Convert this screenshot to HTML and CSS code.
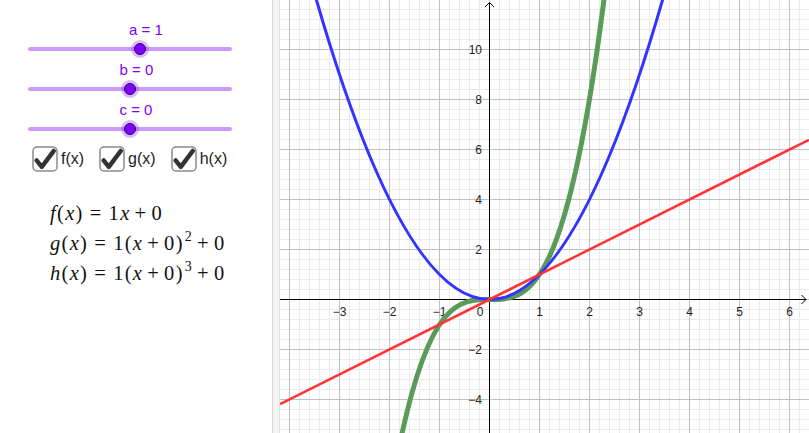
FILE: index.html
```html
<!DOCTYPE html>
<html>
<head>
<meta charset="utf-8">
<link rel="stylesheet" href="styles.css">
</head>
<body>
<div class="app">
  <div class="panel">
    <div class="slider">
      <div class="slabel lbl-a">a = 1</div>
      <div class="track"><span class="knob" style="left:103px"></span></div>
    </div>
    <div class="slider">
      <div class="slabel lbl-b">b = 0</div>
      <div class="track"><span class="knob" style="left:93px"></span></div>
    </div>
    <div class="slider">
      <div class="slabel lbl-b">c = 0</div>
      <div class="track"><span class="knob" style="left:93px"></span></div>
    </div>
    <div class="checks">
      <div class="cb-item">
        <svg class="cbox" width="26" height="26" viewBox="0 0 26 26"><rect x="1" y="1" width="24" height="24" rx="4" fill="#fff" stroke="#8a8a8a" stroke-width="1.5"/><path d="M4.6,14.4 L9.8,20.8 L21.8,4.9" fill="none" stroke="#333" stroke-width="4.4" stroke-linecap="round" stroke-linejoin="round"/></svg>
        <span class="cb-label">f(x)</span>
      </div>
      <div class="cb-item">
        <svg class="cbox" width="26" height="26" viewBox="0 0 26 26"><rect x="1" y="1" width="24" height="24" rx="4" fill="#fff" stroke="#8a8a8a" stroke-width="1.5"/><path d="M4.6,14.4 L9.8,20.8 L21.8,4.9" fill="none" stroke="#333" stroke-width="4.4" stroke-linecap="round" stroke-linejoin="round"/></svg>
        <span class="cb-label">g(x)</span>
      </div>
      <div class="cb-item">
        <svg class="cbox" width="26" height="26" viewBox="0 0 26 26"><rect x="1" y="1" width="24" height="24" rx="4" fill="#fff" stroke="#8a8a8a" stroke-width="1.5"/><path d="M4.6,14.4 L9.8,20.8 L21.8,4.9" fill="none" stroke="#333" stroke-width="4.4" stroke-linecap="round" stroke-linejoin="round"/></svg>
        <span class="cb-label">h(x)</span>
      </div>
    </div>
    <div class="formulas">
      <div class="formula"><i>f</i>(<i>x</i>)<span class="rel">=</span>1<i>x</i><span class="bin">+</span>0</div>
      <div class="formula"><i>g</i>(<i>x</i>)<span class="rel">=</span>1(<i>x</i><span class="bin">+</span>0)<span class="sup">2</span><span class="bin">+</span>0</div>
      <div class="formula"><i>h</i>(<i>x</i>)<span class="rel">=</span>1(<i>x</i><span class="bin">+</span>0)<span class="sup">3</span><span class="bin">+</span>0</div>
    </div>
  </div>
  <div class="divider"></div>
  <svg class="graph" width="529" height="433" viewBox="0 0 529 433">
    <defs>
      <pattern id="minor" x="9" y="9" width="10" height="10" patternUnits="userSpaceOnUse"><path d="M0.5,0V10M0,0.5H10" stroke="#ebebeb" stroke-width="1" fill="none"/></pattern>
      <pattern id="major" x="9" y="49" width="50" height="50" patternUnits="userSpaceOnUse"><path d="M0.5,0V50M0,0.5H50" stroke="#c0c0c0" stroke-width="1" fill="none"/></pattern>
    </defs>
    <rect width="529" height="433" fill="#fff"/>
    <rect width="529" height="433" fill="url(#minor)"/>
    <rect width="529" height="433" fill="url(#major)"/>
    <path d="M209.5,433V3M0,299.5H526" stroke="#000" stroke-width="1" fill="none"/>
    <path d="M205,7 L209.5,2.5 L214,7" stroke="#000" stroke-width="1" fill="none"/>
    <path d="M521.5,295 L526,299.5 L521.5,304" stroke="#000" stroke-width="1" fill="none"/>
    <g class="ax-label xl">
      <text x="59.5" y="316">−3</text>
      <text x="109.5" y="316">−2</text>
      <text x="159.5" y="316">−1</text>
      <text x="259.5" y="316">1</text>
      <text x="309.5" y="316">2</text>
      <text x="359.5" y="316">3</text>
      <text x="409.5" y="316">4</text>
      <text x="459.5" y="316">5</text>
      <text x="509.5" y="316">6</text>
    </g>
    <g class="ax-label yl">
      <text x="203.5" y="316">0</text>
      <text x="202" y="54">10</text>
      <text x="202" y="104">8</text>
      <text x="202" y="154">6</text>
      <text x="202" y="204">4</text>
      <text x="202" y="254">2</text>
      <text x="202" y="354">−2</text>
      <text x="202" y="404">−4</text>
    </g>
    <path d="M119.5,445.3 C187.83,113.2 256.17,537.55 324.5,-4.675" stroke="#5a9a5a" stroke-width="5" fill="none"/>
    <path d="M34.5,-6.75 Q209.5,605.75 384.5,-6.75" stroke="#3333ff" stroke-width="3" fill="none"/>
    <path d="M0,404.25 L529,139.75" stroke="#ff3333" stroke-width="2.5" fill="none"/>
  </svg>
</div>
</body>
</html>
```

FILE: styles.css
```css
html, body {
  margin: 0;
  padding: 0;
  background: #fff;
  overflow: hidden;
}

.app {
  display: flex;
  width: 809px;
  height: 433px;
}

.panel {
  width: 272px;
  flex: none;
  padding-top: 20.5px;
  box-sizing: border-box;
  font-family: "Liberation Sans", Arial, sans-serif;
}

.slider {
  height: 40px;
}

.slabel {
  height: 17px;
  line-height: 17px;
  font-size: 15px;
  color: #8000ff;
  white-space: nowrap;
}

.lbl-a {
  margin-left: 129px;
}

.lbl-b {
  margin-left: 119.5px;
}

.track {
  position: relative;
  margin-top: 9.5px;
  margin-left: 28px;
  width: 204px;
  height: 4px;
  border-radius: 2px;
  background: #cc99ff;
}

.knob {
  position: absolute;
  top: -7px;
  width: 18px;
  height: 18px;
  border-radius: 50%;
  background: rgba(140, 40, 255, 0.32);
}

.knob::after {
  content: "";
  position: absolute;
  left: 3px;
  top: 3px;
  width: 12px;
  height: 12px;
  box-sizing: border-box;
  border-radius: 50%;
  background: #8000ff;
  border: 1px solid #2a1040;
}

.checks {
  display: flex;
  align-items: center;
  margin-top: 5.5px;
  padding-left: 32px;
  height: 26px;
}

.cb-item {
  display: flex;
  align-items: center;
  gap: 3px;
  margin-right: 15px;
}

.cbox {
  display: block;
}

.cb-label {
  font-size: 16px;
  color: #222;
}

.formulas {
  margin-top: 26px;
  margin-left: 50px;
  font-family: "Liberation Serif", "Times New Roman", serif;
  font-size: 20.5px;
  color: #111;
}

.formula {
  height: 30px;
  line-height: 30px;
  letter-spacing: 1.3px;
  white-space: nowrap;
}

.formula i {
  font-style: italic;
}

.rel {
  margin: 0 6px;
}

.bin {
  margin: 0 4px;
}

.sup {
  font-size: 14px;
  vertical-align: 9px;
  line-height: 0;
  margin-left: 1px;
}

.divider {
  width: 8px;
  flex: none;
  box-sizing: border-box;
  background: #f4f4f4;
  border-left: 1px solid #d6d6d6;
  border-right: 1px solid #e0e0e0;
}

.graph {
  display: block;
  flex: none;
}

.ax-label text {
  font-family: "Liberation Sans", Arial, sans-serif;
  font-size: 12px;
  fill: #222;
}

.xl text {
  text-anchor: middle;
}

.yl text {
  text-anchor: end;
}
```
